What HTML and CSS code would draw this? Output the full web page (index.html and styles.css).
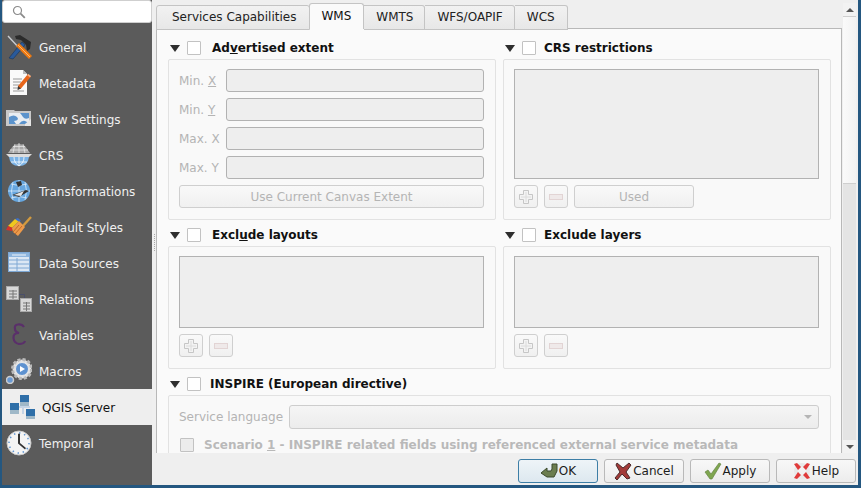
FILE: index.html
```html
<!DOCTYPE html>
<html lang="en">
<head>
<meta charset="utf-8">
<title>QGIS Project Properties</title>
<link rel="stylesheet" href="styles.css">
</head>
<body>
<div class="window">
  <div class="main">
    <aside class="sidebar">
      <div class="search">
        <svg class="search-icon" width="14" height="14" viewBox="0 0 14 14"><circle cx="5.500" cy="5.500" r="4" fill="none" stroke="#8a8a8a" stroke-width="1.200"/><path d="M8.600 8.600l4.200 4.200" stroke="#8a8a8a" stroke-width="1.800"/></svg>
      </div>
      <nav class="nav">
        <div class="nav-item">
          <svg class="nav-icon" width="26" height="26" viewBox="0 0 26 26"><path d="M2 2l12 13" stroke="#c9ccd0" stroke-width="1.400"/><path d="M3 24l4 1 12-14-3-3z" fill="#2a5a9a" stroke="#16345c" stroke-width=".6"/><path d="M9 2l5-1 11 7-1 7-3 2-1-6-5-5-5-1z" fill="#2b2b2b"/><path d="M10 12l3-3 13 13-3 3z" fill="#ee7a12"/><path d="M12 11l12 12" stroke="#ffb46a"/></svg>
          <span>General</span>
        </div>
        <div class="nav-item">
          <svg class="nav-icon" width="26" height="26" viewBox="0 0 26 26"><path d="M4 0h13l4 4v21H4z" fill="#fafafa"/><path d="M17 0v4h4z" fill="#bdbdbd"/><path d="M7 9h9M7 12h8M7 15h6M7 18h6M7 21h11" stroke="#9a9a9a"/><path d="M12 16L22 4l3 2.500-10 12-3 1z" fill="#e8651a"/><path d="M21 5l3 2.500 1-1.500-2.500-2z" fill="#f5b58a"/><path d="M12 16l3 2.500-3.500 1.500z" fill="#3a3a3a"/></svg>
          <span>Metadata</span>
        </div>
        <div class="nav-item">
          <svg class="nav-icon" width="26" height="26" viewBox="0 0 26 26"><path d="M0 4h8l1 1h16v15H0z" fill="#c8c8c8"/><rect x="3" y="7" width="20" height="11" fill="#e8edf2"/><path d="M3 18v-7q5-3 8 0t-3 4l2 3z" fill="#5b93cc"/><path d="M14 7h9v5q-4 2-6-1t-3-4zM13 18q3-4 6-3t4 3z" fill="#5b93cc"/><path d="M19 18l6-5v7h-6z" fill="#e6e6e6"/></svg>
          <span>View Settings</span>
        </div>
        <div class="nav-item">
          <svg class="nav-icon" width="26" height="26" viewBox="0 0 26 26"><path d="M2 11L7 4Q13 0 19 4l5 7z" fill="#a9a9a9"/><path d="M9 2L7 11M13 1v10M17 2l2 9M4 8h18M7 4.500h12" stroke="#e6e6e6" stroke-width=".8"/><path d="M0 12h26l-3 3H3z" fill="#dcdcdc"/><path d="M3 15h20q-1 9-10 9T3 15z" fill="#7bb3e6"/><path d="M8 15q0 6 5 9 5-3 5-9M5 20h16M13 15v9" stroke="#fff" fill="none" stroke-width=".8"/></svg>
          <span>CRS</span>
        </div>
        <div class="nav-item">
          <svg class="nav-icon" width="26" height="26" viewBox="0 0 26 26"><circle cx="13" cy="13" r="11" fill="#66a6df"/><path d="M13 2v22M2 13h22M5 6q8 3 16 0M5 20q8-3 16 0M7 4q-3 9 0 18M19 4q3 9 0 18" stroke="#d9ebfa" fill="none" stroke-width=".8"/><path d="M10 4l5-1 1 4-4 2zM6 17l14-5 3 1-10 6z" fill="#333"/><path d="M8 17l10-4-3 5z" fill="#e6e6e6"/></svg>
          <span>Transformations</span>
        </div>
        <div class="nav-item">
          <svg class="nav-icon" width="26" height="26" viewBox="0 0 26 26"><path d="M16 13L25 3" stroke="#d29a3f" stroke-width="2.400"/><path d="M2 12l7-7 5 1-8 8z" fill="#f0c81e"/><path d="M0 16l2-4 5 2-1 3z" fill="#d0342c"/><path d="M9 5l3-1 3 3-2 1z" fill="#3f6fc4"/><path d="M6 14l7-7 6 6-7 9-5-4z" fill="#ed9a4a"/><path d="M9 20l7-8M7 18l6-7" stroke="#c06a28"/></svg>
          <span>Default Styles</span>
        </div>
        <div class="nav-item">
          <svg class="nav-icon" width="26" height="26" viewBox="0 0 26 26"><rect x="2.500" y="2.500" width="21" height="19" fill="#dbe7f4" stroke="#7ea8d4"/><rect x="3" y="3" width="20" height="4" fill="#8db5de"/><path d="M6 5h14" stroke="#eef4fb"/><path d="M3 10h20M3 14h20M3 18h20M11 8v14" stroke="#7ea8d4"/></svg>
          <span>Data Sources</span>
        </div>
        <div class="nav-item">
          <svg class="nav-icon" width="26" height="26" viewBox="0 0 26 26"><path d="M13 8.500h5.500v5" fill="none" stroke="#4a4f6a"/><rect x=".5" y=".5" width="12" height="13" fill="#d8d8d8" stroke="#aaa"/><path d="M3 5h8M3 8h8M3 11h8M7 4v9" stroke="#777"/><rect x="14.500" y="12.500" width="11" height="13" fill="#d8d8d8" stroke="#aaa"/><path d="M17 17h7M17 20h7M17 23h7M20.500 16v9" stroke="#777"/></svg>
          <span>Relations</span>
        </div>
        <div class="nav-item">
          <svg class="nav-icon" width="26" height="26" viewBox="0 0 26 26"><path d="M18 5q-2-3-6-2.500T9 7q0 3 4 4-6 0-5.500 5t5.500 6q5 0 6-3" fill="none" stroke="#5a2f6a" stroke-width="2.200"/></svg>
          <span>Variables</span>
        </div>
        <div class="nav-item">
          <svg class="nav-icon" width="26" height="26" viewBox="0 0 26 26"><circle cx="16" cy="11" r="9.500" fill="#e4e4e4" stroke="#bbb" stroke-width="3" stroke-dasharray="3 2"/><circle cx="16" cy="11" r="6.500" fill="#5e92d0" stroke="#e9e9e9"/><path d="M14 8l5 3-5 3z" fill="#fff"/><circle cx="4" cy="22" r="3.500" fill="#6a9ad4" stroke="#ccc" stroke-width="1.500"/></svg>
          <span>Macros</span>
        </div>
        <div class="nav-item active">
          <svg class="nav-icon" width="26" height="26" viewBox="0 0 26 26"><path d="M7 13h14M14 8v12" stroke="#c5d5e6" stroke-width="2"/><rect x="11" y="1" width="9" height="7" fill="#2f6fa8"/><rect x="11" y="8" width="9" height="4" fill="#9fb8c8"/><rect x="1" y="9" width="9" height="7" fill="#2f6fa8"/><rect x="1" y="16" width="9" height="4" fill="#9fb8c8"/><rect x="17" y="15" width="9" height="7" fill="#2f6fa8"/><rect x="17" y="22" width="9" height="3" fill="#9fb8c8"/></svg>
          <span>QGIS Server</span>
        </div>
        <div class="nav-item">
          <svg class="nav-icon" width="26" height="26" viewBox="0 0 26 26"><circle cx="13" cy="13" r="12" fill="#f4f4f4" stroke="#c8c8c8"/><circle cx="13" cy="13" r="10" fill="none" stroke="#5f94d0" stroke-width="1.500" stroke-dasharray="1.500 3.700"/><path d="M12 4l1-.5 1 .5v9l6 5-1 1.500-7-6z" fill="#333"/></svg>
          <span>Temporal</span>
        </div>
      </nav>
    </aside>
    <div class="splitter"><i class="grip"></i></div>
    <div class="content">
      <div class="scrollarea">
        <div class="page">
          <div class="tabs">
            <div class="tab">Services Capabilities</div>
            <div class="tab current">WMS</div>
            <div class="tab tight">WMTS</div>
            <div class="tab tight">WFS/OAPIF</div>
            <div class="tab">WCS</div>
          </div>
          <div class="pane">
            <div class="grid">
              <section class="group">
                <h3 class="heading"><i class="tri"></i><i class="check"></i><span class="indent">Ad<u>v</u>ertised extent</span></h3>
                <div class="box">
                  <div class="field"><label>Min. <u>X</u></label><div class="input"></div></div>
                  <div class="field"><label>Min. <u>Y</u></label><div class="input"></div></div>
                  <div class="field"><label>Max. X</label><div class="input"></div></div>
                  <div class="field"><label>Max. Y</label><div class="input"></div></div>
                  <div class="btn wide">Use Current Canvas Extent</div>
                </div>
              </section>
              <section class="group">
                <h3 class="heading"><i class="tri"></i><i class="check"></i><span>CRS restrictions</span></h3>
                <div class="box">
                  <div class="list tall"></div>
                  <div class="tools">
                    <div class="btn square"><svg width="16" height="16" viewBox="0 0 16 16"><path class="plus" d="M5.500 1.500h5v4h4v5h-4v4h-5v-4h-4v-5h4z"/><path class="plusin" d="M8 3v10M3 8h10"/></svg></div>
                    <div class="btn square"><svg width="16" height="8" viewBox="0 0 16 8"><rect class="minus" x="1.500" y="1.500" width="13" height="5"/></svg></div>
                    <div class="btn used">Used</div>
                  </div>
                </div>
              </section>
              <section class="group">
                <h3 class="heading"><i class="tri"></i><i class="check"></i><span class="indent">Excl<u>u</u>de layouts</span></h3>
                <div class="box">
                  <div class="list"></div>
                  <div class="tools">
                    <div class="btn square"><svg width="16" height="16" viewBox="0 0 16 16"><path class="plus" d="M5.500 1.500h5v4h4v5h-4v4h-5v-4h-4v-5h4z"/><path class="plusin" d="M8 3v10M3 8h10"/></svg></div>
                    <div class="btn square"><svg width="16" height="8" viewBox="0 0 16 8"><rect class="minus" x="1.500" y="1.500" width="13" height="5"/></svg></div>
                  </div>
                </div>
              </section>
              <section class="group">
                <h3 class="heading"><i class="tri"></i><i class="check"></i><span>Exclude layers</span></h3>
                <div class="box">
                  <div class="list"></div>
                  <div class="tools">
                    <div class="btn square"><svg width="16" height="16" viewBox="0 0 16 16"><path class="plus" d="M5.500 1.500h5v4h4v5h-4v4h-5v-4h-4v-5h4z"/><path class="plusin" d="M8 3v10M3 8h10"/></svg></div>
                    <div class="btn square"><svg width="16" height="8" viewBox="0 0 16 8"><rect class="minus" x="1.500" y="1.500" width="13" height="5"/></svg></div>
                  </div>
                </div>
              </section>
            </div>
            <section class="group inspire">
              <h3 class="heading"><i class="tri"></i><i class="check"></i><span>INSPIRE (European directive)</span></h3>
              <div class="box">
                <div class="lang"><label>Service language</label><div class="combo"><i class="combo-arrow"></i></div></div>
                <div class="scenario"><i class="check off"></i><b>Scenario <u>1</u> - INSPIRE related fields using referenced external service metadata</b></div>
              </div>
            </section>
          </div>
        </div>
        <div class="scrollbar">
          <div class="sb-btn"><i class="up"></i></div>
          <div class="sb-thumb"></div>
          <div class="sb-track"></div>
          <div class="sb-btn"><i class="down"></i></div>
        </div>
      </div>
      <div class="buttonbar">
        <div class="dlg default">
          <svg width="18" height="16" viewBox="0 0 18 16"><path d="M17 1v7l-3 6H7L1 10l6-5v3h4l1-2V1z" fill="#6b7d4f" stroke="#3c4a2c"/></svg>
          OK
        </div>
        <div class="dlg">
          <svg width="18" height="18" viewBox="0 0 18 18"><path d="M3 1l6 5 6-5 2 2-5 7 4 6-3 1-5-5-5 6-2-2 5-6-4-7z" fill="#a33a38" stroke="#4c2a2a"/></svg>
          Cancel
        </div>
        <div class="dlg">
          <svg width="18" height="18" viewBox="0 0 18 18"><path d="M1 10l3-2 3 4 8-11 2 1-9 15H6z" fill="#7fa650" stroke="#5c7c3a" stroke-width=".6"/></svg>
          Apply
        </div>
        <div class="dlg">
          <svg width="18" height="18" viewBox="0 0 18 18"><circle cx="9" cy="9" r="6" fill="none" stroke="#e9e9e9" stroke-width="4"/><path d="M1 2l3-1 4 4-3 3zM17 2l-3-1-4 4 3 3zM1 16l3 1 4-4-3-3zM17 16l-3 1-4-4 3-3z" fill="#e03b3b"/></svg>
          Help
        </div>
      </div>
    </div>
  </div>
</div>
</body>
</html>
```

FILE: styles.css
```css
* { box-sizing: border-box; }
html, body { margin: 0; padding: 0; }
body { font-family: "DejaVu Sans", sans-serif; font-size: 12px; color: #1c1c1c; background: #1f4e79; }
.window { width: 861px; height: 488px; padding: 0 3px 3px 2px; background: #245780; overflow: hidden; }
.main { display: flex; height: 485px; background: #efefef; }

.sidebar { width: 150px; flex: none; background: #5b5b5b; display: flex; flex-direction: column; }
.search { height: 23px; background: #fff; border: 1px solid #cfcfcf; border-radius: 3px; padding: 4px 0 0 9px; }
.search-icon { display: block; }
.nav { padding-top: 6px; }
.nav-item { height: 36px; display: flex; align-items: center; padding-left: 4px; gap: 7px; color: #f0f0f0; }
.nav-item span { padding-top: 2px; }
.nav-icon { flex: none; }
.nav-item.active { background: #eeeeee; color: #111; padding-left: 7px; }

.splitter { width: 4px; flex: none; background: #efefef; display: flex; align-items: center; justify-content: center; padding-bottom: 1px; }
.grip { display: block; width: 1px; height: 17px; border-left: 1px dotted #a8a8a8; }
.content { flex: 1; display: flex; flex-direction: column; min-width: 0; }

.scrollarea { height: 453px; flex: none; display: flex; overflow: hidden; }
.page { width: 686px; flex: none; padding-top: 3px; background: #efefef; }
.tabs { display: flex; height: 26px; position: relative; z-index: 1; }
.tab { height: 25px; margin-top: 2px; padding: 0 12px; border: 1px solid #c4c4c4; border-left-width: 0; border-radius: 0 3px 0 0; background: linear-gradient(#f2f2f2, #e7e7e7); line-height: 23px; color: #222; white-space: nowrap; }
.tab:first-child { border-left-width: 1px; border-radius: 3px 3px 0 0; padding: 0 13px 0 15px; }
.tab.current { height: 26px; margin-top: 0; background: #fafafa; border-left-width: 1px; border-bottom: none; border-radius: 3px 3px 0 0; margin-left: -1px; color: #111; line-height: 24px; padding: 0 12px 0 11px; }
.tab.current + .tab { padding-left: 12px; }
.tab.tight { padding-right: 11px; }
.pane { height: 500px; margin-top: -1px; background: #fafafa; border: 1px solid #b8b8b8; padding: 12px 10px 0 11px; }

.grid { display: grid; grid-template-columns: 328px 328px; column-gap: 7px; row-gap: 8px; }
.heading { display: flex; align-items: center; height: 14px; margin: 0; font-size: 12px; font-weight: 700; color: #111; white-space: nowrap; }
.heading span { margin-left: 8px; }
.tri { width: 0; height: 0; border-left: 5.500px solid transparent; border-right: 5.500px solid transparent; border-top: 7px solid #2e2e2e; margin: 1px 7px 0 2px; flex: none; }
.check { width: 14px; height: 14px; flex: none; display: block; background: #fff; border: 1px solid #c2c2c2; border-radius: 1px; }
.check.off { background: #ececec; }
.heading .indent { margin-left: 11px; }
.box { margin-top: 4px; border: 1px solid #e2e2e2; border-radius: 2px; background: #f9f9f9; padding: 9px 11px 11px 10px; }

.field { display: flex; align-items: center; height: 23px; margin-bottom: 6px; color: #b4b4b4; }
.field label { width: 47px; flex: none; }
.input { flex: 1; height: 23px; background: #eeeeee; border: 1px solid #b2b2b2; border-radius: 3px; }
.btn { height: 23px; display: flex; align-items: center; justify-content: center; border: 1px solid #cfcfcf; border-radius: 3px; background: linear-gradient(#f9f9f9, #f0f0f0); color: #b4b4b4; }
.wide { margin-top: 6px; }
.list { height: 72px; background: #eeeeee; border: 1px solid #b2b2b2; }
.list.tall { height: 110px; }
.tools { display: flex; gap: 6px; margin-top: 6px; }
.square { width: 24px; }
.used { width: 120px; }
.plus { fill: #f3f3f3; stroke: #c6c6c6; }
.plusin { stroke: #dcdcdc; fill: none; }
.minus { fill: #efe9e9; stroke: #e2d4d4; }

.inspire { margin-top: 8px; }
.inspire .heading span { margin-left: 9px; }
.inspire .box { height: 120px; padding-top: 9px; }
.lang { display: flex; align-items: center; gap: 6px; height: 24px; color: #b4b4b4; }
.lang label { white-space: nowrap; }
.combo { flex: 1; height: 24px; position: relative; border: 1px solid #cdcdcd; border-radius: 3px; background: linear-gradient(#f5f5f5, #ececec); }
.combo-arrow { position: absolute; right: 6px; top: 9px; width: 0; height: 0; border-left: 4px solid transparent; border-right: 4px solid transparent; border-top: 4px solid #b5b5b5; }
.scenario { display: flex; align-items: center; margin-top: 9px; height: 14px; margin-left: 1px; gap: 10px; color: #b9b9b9; white-space: nowrap; }

.scrollbar { width: 13px; margin-left: 1px; padding-top: 3px; display: flex; flex-direction: column; background: #efefef; }
.sb-btn { height: 13px; flex: none; display: flex; align-items: center; justify-content: center; background: #f2f2f2; }
.up { width: 0; height: 0; border-left: 4px solid transparent; border-right: 4px solid transparent; border-bottom: 4px solid #555; }
.down { width: 0; height: 0; border-left: 4px solid transparent; border-right: 4px solid transparent; border-top: 4px solid #555; }
.sb-thumb { height: 168px; flex: none; background: linear-gradient(90deg, #fafafa, #f2f2f2); border: 1px solid #cfcfcf; border-width: 1px 0; }
.sb-track { flex: 1; background: #e4e4e4; }

.buttonbar { height: 32px; flex: none; display: flex; justify-content: flex-end; align-items: flex-start; gap: 6px; padding: 6px 2px 0 0; background: #efefef; }
.dlg { width: 80px; height: 24px; display: flex; align-items: center; justify-content: center; gap: 1px; border: 1px solid #b9b9b9; border-radius: 3px; background: linear-gradient(#f8f8f8, #ececec); color: #1c1c1c; }
.dlg.default { border-color: #3d7ea6; background: linear-gradient(#eef4f8, #dde8ef); }
```
